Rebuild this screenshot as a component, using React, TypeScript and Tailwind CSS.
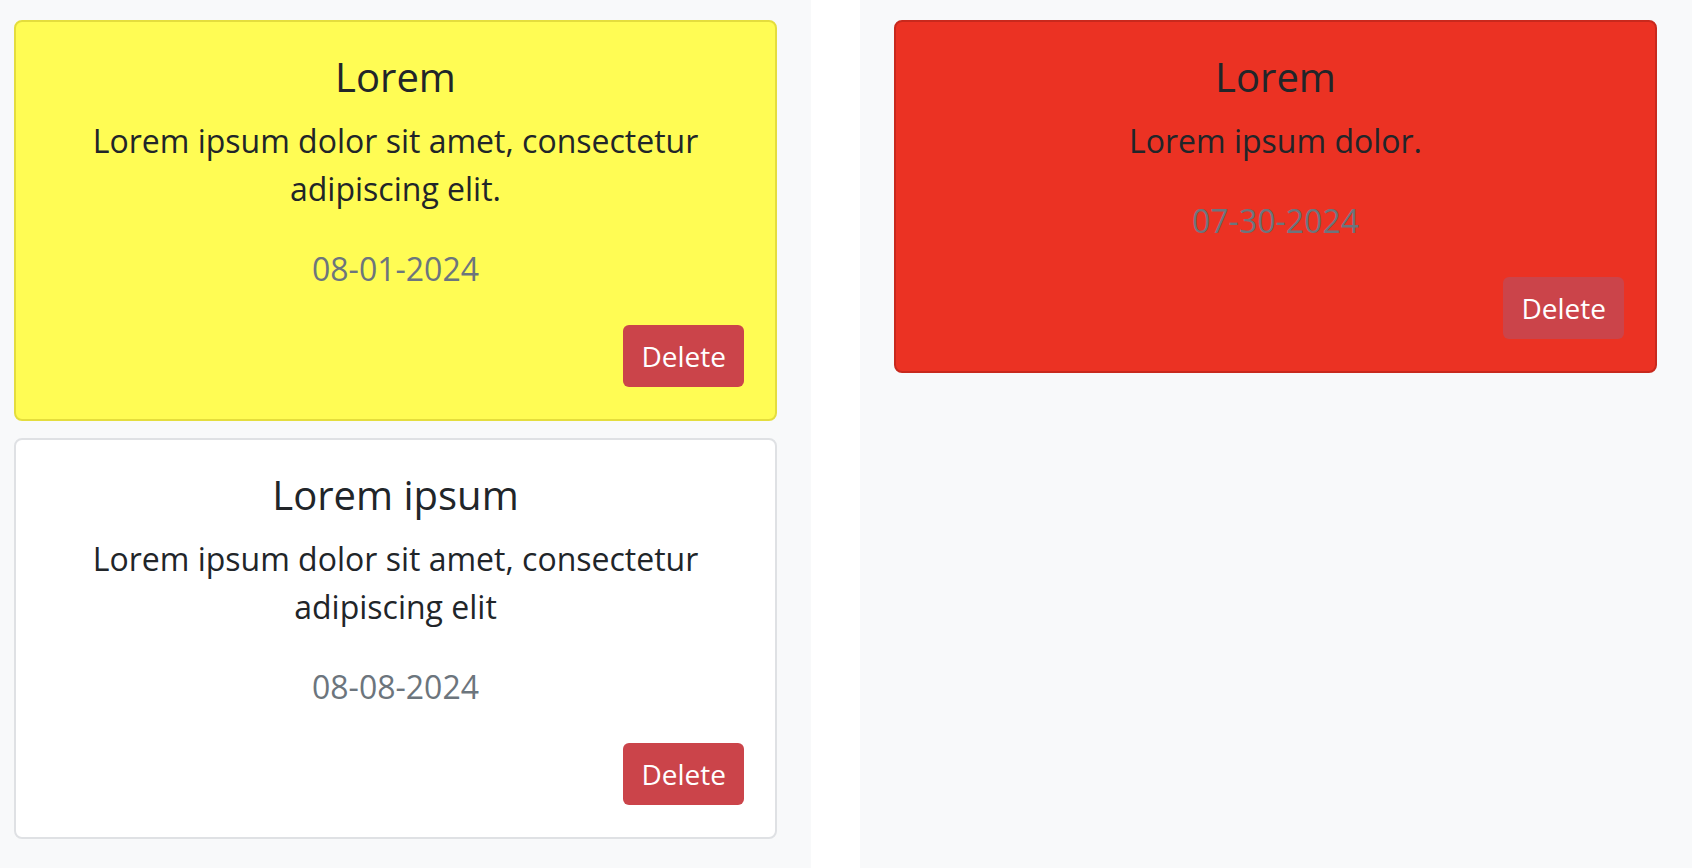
type Note = {
  id: number;
  title: string;
  body: string;
  date: string;
  tone: 'yellow' | 'white' | 'red';
};

const LEFT_NOTES: Note[] = [
  {
    id: 1,
    title: 'Lorem',
    body: 'Lorem ipsum dolor sit amet, consectetur adipiscing elit.',
    date: '08-01-2024',
    tone: 'yellow',
  },
  {
    id: 2,
    title: 'Lorem ipsum',
    body: 'Lorem ipsum dolor sit amet, consectetur adipiscing elit',
    date: '08-08-2024',
    tone: 'white',
  },
];

const RIGHT_NOTES: Note[] = [
  {
    id: 3,
    title: 'Lorem',
    body: 'Lorem ipsum dolor.',
    date: '07-30-2024',
    tone: 'red',
  },
];

const TONE_CLASSES: Record<Note['tone'], string> = {
  yellow: 'bg-[#fffc54] border-[#e4dd3d]',
  white: 'bg-white border-[#dfe1e4]',
  red: 'bg-[#eb3223] border-[#c8291d]',
};

function NoteCard({ note }: { note: Note }) {
  return (
    <div
      className={`w-[763px] rounded-[8px] border-2 px-[31px] pt-[31px] pb-[32px] text-center text-[#212529] ${TONE_CLASSES[note.tone]}`}
    >
      <h5 className="mb-[16px] text-[40px] leading-[48px]">{note.title}</h5>
      <p className="mx-auto mb-[32px] max-w-[620px] text-[32px] leading-[48px]">{note.body}</p>
      <p className="mb-[32px] text-[32px] leading-[48px] text-[#6c757d]">{note.date}</p>
      <div className="flex justify-end">
        <button className="h-[62px] rounded-[6px] bg-[#cb444a] px-[18px] text-[28px] leading-[42px] text-white">
          Delete
        </button>
      </div>
    </div>
  );
}

export default function App() {
  return (
    <div
      className="flex min-h-[868px] bg-white"
      style={{ fontFamily: '"Open Sans", "Noto Sans", sans-serif' }}
    >
      {/* Left column */}
      <div className="flex w-[811px] flex-col gap-[17px] bg-[#f8f9fa] pl-[14px] pt-[20px]">
        {LEFT_NOTES.map((n) => (
          <NoteCard key={n.id} note={n} />
        ))}
      </div>

      {/* Gutter */}
      <div className="w-[49px] bg-white" />

      {/* Right column */}
      <div className="flex flex-1 flex-col gap-[17px] bg-[#f8f9fa] pl-[34px] pt-[20px]">
        {RIGHT_NOTES.map((n) => (
          <NoteCard key={n.id} note={n} />
        ))}
      </div>
    </div>
  );
}
